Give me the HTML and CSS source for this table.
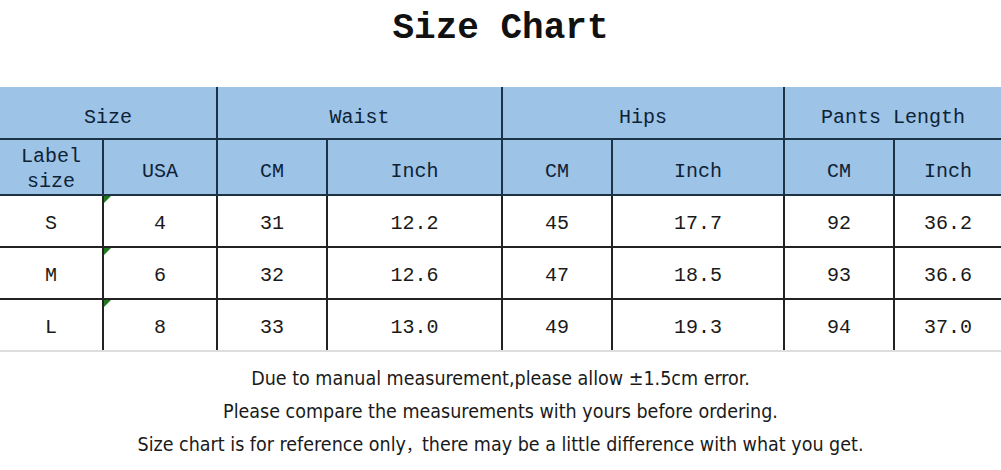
FILE: index.html
```html
<!DOCTYPE html>
<html>
<head>
<meta charset="utf-8">
<link rel="stylesheet" href="styles.css">
</head>
<body>
<div class="page">
  <h1 class="title">Size Chart</h1>
  <table class="chart">
    <colgroup>
      <col class="c1"><col class="c2"><col class="c3"><col class="c4">
      <col class="c5"><col class="c6"><col class="c7"><col class="c8">
    </colgroup>
    <thead>
      <tr class="h1">
        <th colspan="2">Size</th>
        <th colspan="2">Waist</th>
        <th colspan="2">Hips</th>
        <th colspan="2">Pants Length</th>
      </tr>
      <tr class="h2">
        <th class="label">Label<br>size</th>
        <th>USA</th>
        <th>CM</th>
        <th>Inch</th>
        <th>CM</th>
        <th>Inch</th>
        <th>CM</th>
        <th>Inch</th>
      </tr>
    </thead>
    <tbody>
      <tr><td>S</td><td class="mark">4</td><td>31</td><td>12.2</td><td>45</td><td>17.7</td><td>92</td><td>36.2</td></tr>
      <tr><td>M</td><td class="mark">6</td><td>32</td><td>12.6</td><td>47</td><td>18.5</td><td>93</td><td>36.6</td></tr>
      <tr><td>L</td><td class="mark">8</td><td>33</td><td>13.0</td><td>49</td><td>19.3</td><td>94</td><td>37.0</td></tr>
    </tbody>
  </table>
  <div class="notes">
    <p>Due to manual measurement,please allow ±1.5cm error.</p>
    <p>Please compare the measurements with yours before ordering.</p>
    <p>Size chart is for reference only<span class="cjk">，</span>there may be a little difference with what you get.</p>
  </div>
</div>
</body>
</html>
```

FILE: styles.css
```css
html, body {
  margin: 0;
  padding: 0;
  background: #fff;
}
.page {
  width: 1001px;
  height: 470px;
  overflow: hidden;
}
.title {
  margin: 0;
  height: 87px;
  display: flex;
  align-items: flex-start;
  justify-content: center;
  padding-top: 5px;
  box-sizing: border-box;
  font-family: "Liberation Mono", "DejaVu Sans Mono", monospace;
  font-weight: bold;
  font-size: 36px;
  line-height: 48px;
  color: #111;
}
.chart {
  width: 1001px;
  table-layout: fixed;
  border-collapse: collapse;
  font-family: "Liberation Mono", "DejaVu Sans Mono", monospace;
  font-size: 20px;
  color: #1a1a1a;
}
.c1 { width: 103px; }
.c2 { width: 114px; }
.c3 { width: 110px; }
.c4 { width: 175px; }
.c5 { width: 110px; }
.c6 { width: 172px; }
.c7 { width: 110px; }
.c8 { width: 107px; }
.chart th, .chart td {
  text-align: center;
  padding: 0;
  border: 2px solid #222;
  font-weight: normal;
  box-sizing: border-box;
}
.chart tr > :first-child { border-left: none; }
.chart tr > :last-child { border-right: none; }
.chart thead th {
  background: #9dc3e6;
  color: #0e2236;
  border-color: #1c3346;
}
.chart thead tr.h1 th { border-top: none; }
.chart .h1 th { height: 52px; padding-top: 9px; }
.chart .h2 th { height: 55px; padding-top: 8px; }
.chart .h2 th.label { line-height: 25px; padding-top: 4px; }
.chart td { height: 52px; padding-top: 4px; position: relative; }
.chart tbody tr:last-child td { border-bottom: 2px solid #ddd; }
.chart td.mark::before {
  content: "";
  position: absolute;
  left: 0;
  top: 0;
  width: 0;
  height: 0;
  border-top: 7px solid #1f7a1f;
  border-right: 7px solid transparent;
}
.notes {
  padding-top: 11px;
  font-family: "Liberation Sans Narrow", "DejaVu Sans Condensed", "Liberation Sans", "Noto Sans CJK SC", sans-serif;
  font-size: 19.5px;
  color: #1a1a1a;
  text-align: center;
}
.notes .cjk {
  font-family: "Noto Sans CJK SC", sans-serif;
  font-size: 16px;
}
.notes p {
  margin: 0;
  line-height: 32.5px;
}
```
